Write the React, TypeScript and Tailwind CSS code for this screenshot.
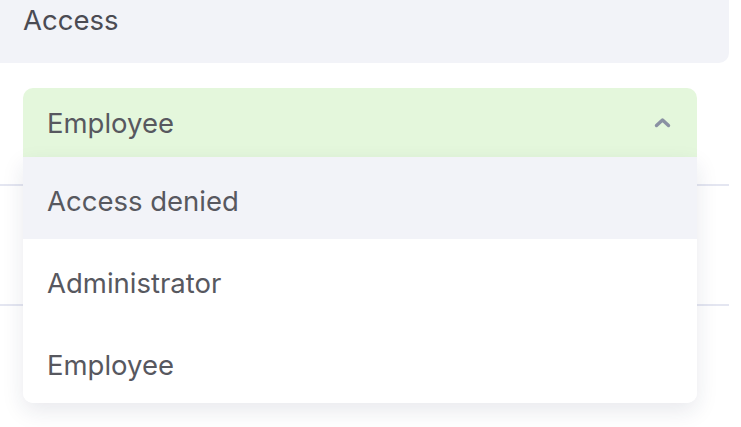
import React from "react";

export default function App() {
  const options = ["Access denied", "Administrator", "Employee"];
  return (
    <div
      className="w-[741px] h-[427px] bg-white overflow-hidden relative"
      style={{ fontFamily: "Inter, 'Noto Sans', sans-serif" }}
    >
      <div className="w-[729px] h-[63px] bg-[#f2f3f8] rounded-br-[10px] pl-[23px] pt-[2px]">
        <div className="text-[27.5px] leading-[36px] text-[#4b4b53]">Access</div>
      </div>
      <div className="relative w-[729px]">
        <div className="pt-[25px] pb-[27px] border-b-2 border-[#e4e6f1]">
          <div className="ml-[23px] w-[674px] h-[69px] bg-[#e4f7dc] rounded-t-[10px] flex items-center justify-between pl-[24px] pr-[26px]">
            <span className="text-[27.5px] text-[#57585f] pt-[2px]">Employee</span>
            <svg width="17" height="11" viewBox="0 0 17 11" fill="none">
              <path d="M2.5 8.5 L8.5 3 L14.5 8.5" stroke="#8a91a3" strokeWidth="3.4" strokeLinecap="round" strokeLinejoin="round" />
            </svg>
          </div>
        </div>
        <div className="h-[120px] border-b-2 border-[#e4e6f1]" />
        <div className="absolute left-[23px] top-[94px] w-[674px] bg-white rounded-b-[10px] shadow-[0_8px_22px_rgba(30,40,80,0.10)] overflow-hidden">
          {options.map((o, i) => (
            <div
              key={o}
              className={`h-[82px] flex items-center pl-[24px] pt-[7px] text-[27.5px] text-[#57585f] ${i === 0 ? "bg-[#f2f3f8]" : "bg-white"}`}
            >
              {o}
            </div>
          ))}
        </div>
      </div>
    </div>
  );
}
